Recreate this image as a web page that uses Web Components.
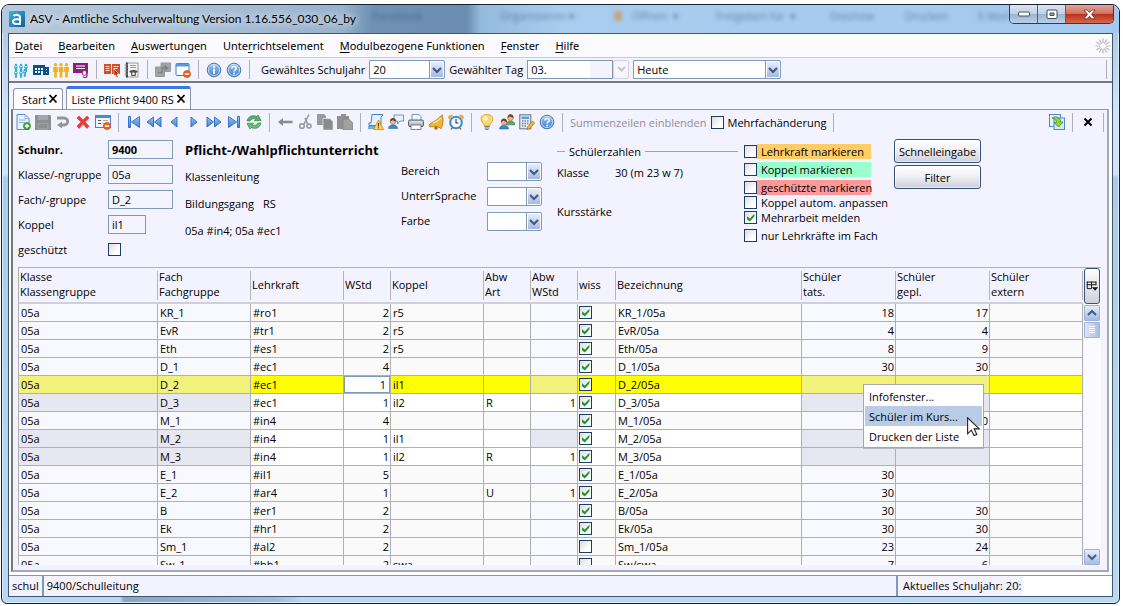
<!DOCTYPE html>
<html lang="de">
<head>
<meta charset="utf-8">
<title>ASV - Amtliche Schulverwaltung</title>
<style>
html, body { margin: 0; background: #fff; }
body { font: 11px/15px "Open Sans", "Noto Sans", sans-serif; color: #000; min-height: 100vh; display: flex; flex-direction: column; }
asv-window { flex: 1; }
</style>
</head>
<body>
<asv-window heading="ASV - Amtliche Schulverwaltung Version 1.16.556_030_06_by">
  <asv-menubar></asv-menubar>
  <asv-mainbar></asv-mainbar>
  <asv-tabs></asv-tabs>
  <asv-panel>
    <asv-listbar></asv-listbar>
    <asv-form></asv-form>
    <asv-grid></asv-grid>
  </asv-panel>
  <asv-status slot="status"></asv-status>
</asv-window>

<script>
const CONTROLS = `
  :host, * { box-sizing: border-box; }
  button, input, select { font: inherit; color: inherit; margin: 0; }
  .field { display: block; height: 19px; border: 1px solid #7f9ab8; background: #f4f4ff; padding: 0 3px; border-radius: 0; outline: 0; }
  .combo { height: 19px; appearance: none; border: 1px solid #7f9ab8; border-radius: 0 2px 2px 0; outline: 0; padding: 0 18px 0 3px; line-height: 17px;
    background: url("data:image/svg+xml,%3Csvg xmlns='http://www.w3.org/2000/svg' width='15' height='17'%3E%3Cdefs%3E%3ClinearGradient id='g' x2='0' y2='1'%3E%3Cstop stop-color='%23eaf0fb'/%3E%3Cstop offset='1' stop-color='%23a3b8de'/%3E%3C/linearGradient%3E%3C/defs%3E%3Cpath d='M0 0h1v17H0z' fill='%237f9ab8'/%3E%3Crect x='1.5' y='.5' width='13' height='16' rx='1' fill='url(%23g)' stroke='%23fff'/%3E%3Cpath d='M4 7l4 4 4-4' fill='none' stroke='%23425a86' stroke-width='2.2'/%3E%3C/svg%3E") right 0 top 0 no-repeat #fff; }
  .tick { appearance: none; flex: none; width: 13px; height: 13px; border: 1px solid #1d3c66; background: linear-gradient(135deg, #dcdcdc, #fff 70%); display: block; }
  .tick:checked { background: url("data:image/svg+xml,%3Csvg xmlns='http://www.w3.org/2000/svg' width='11' height='11'%3E%3Cpath d='M2 4.2v3L4.8 9.6 9.4 4.6V1.8L4.8 6.6z' fill='%2321962b'/%3E%3C/svg%3E") center no-repeat, linear-gradient(135deg, #dcdcdc, #fff 70%); }
  .sep { flex: none; width: 1px; background: #b0b0b8; }
  .tool { flex: none; border: 0; background: none; padding: 0; width: 16px; height: 16px; display: block; }
`;

function define(name, css, html, after) {
  const tpl = document.createElement('template');
  tpl.innerHTML = `<style>${CONTROLS}${css}</style>${html}`;
  customElements.define(name, class extends HTMLElement {
    connectedCallback() {
      if (this.shadowRoot) return;
      this.attachShadow({ mode: 'open' }).append(tpl.content.cloneNode(true));
      if (after) after(this, this.shadowRoot);
    }
  });
}

const person = (x, c) => `<circle cx="${x}" cy="2.7" r="1.7" fill="${c}"/><path d="M${x - 2.3} 5h4.600v5h-1v5.500h-2.600v-5.500h-1z" fill="${c}"/>`;
const kid = (x, y) => `<circle cx="${x}" cy="${y}" r="1.300"/><path d="M${x - 2.300} ${y + .8}l2.300 1.400 2.300-1.400-1.200 3v3h-2.200v-3z"/>`;
const blue = 'fill="url(#b)" stroke="#2b6bc4" stroke-width=".9" stroke-linejoin="round"';
const minus = '<circle cx="12" cy="12" r="3.6" fill="#e8641b" stroke="#c24a0c" stroke-width=".6"/><path d="M9.8 11.3h4.4v1.5H9.8z" fill="#fff"/>';
const round = s => `<circle cx="8" cy="8" r="6.800" fill="url(#b)" stroke="#4a77ae"/><circle cx="8" cy="8" r="5.600" fill="none" stroke="#d6e8fa" stroke-width=".8"/>${s}`;
const query = round('<path d="M5.9 6.4c0-2.6 4.3-2.6 4.3 0 0 1.5-2.1 1.6-2.1 3.2" fill="none" stroke="#fff" stroke-width="1.5"/><circle cx="8.1" cy="11.5" r="1" fill="#fff"/>');
const user = (x, y, c) => `<circle cx="${x}" cy="${y}" r="2.8" fill="#f0bd86" stroke="#8a5a2a" stroke-width=".5"/><path d="M${x - 3} ${y}c0-4.6 6-4.6 6 0-2-.2-3.600-1.500-3.600-1.500s-1 1.500-2.400 1.500z" fill="#6d4420"/><path d="M${x - 4.500} ${y + 7}c0-5 9-5 9 0z" fill="${c}" stroke="#235a9c" stroke-width=".5"/>`;
const ICONS = {
  pupils: `<g fill="#35b1d8">${kid(3, 3)}${kid(8, 3)}${kid(13, 3)}${kid(3, 9)}${kid(8, 9)}${kid(11.8, 8)}</g>`,
  school: '<path d="M0 3h12v2h4v8H0z" fill="#0e4f86"/><path d="M2 6h2v2H2zM5 6h2v2H5zM8 6h2v2H8zM2 9h2v2H2zM5 9h2v2H5zM8 9h2v4H8zM13 7h1v1h-1zM13 10h1v1h-1z" fill="#e8f2fb"/>',
  teachers: person(2.500, '#eeb21c') + person(8, '#eeb21c') + person(13.500, '#eeb21c'),
  cert: '<path d="M0 1h15v10H0z" fill="#8d1d82"/><path d="M3 4h9M3 6.500h9" stroke="#fff"/><circle cx="11.500" cy="11" r="2.400" fill="#fff" stroke="#8d1d82"/><path d="M14 9v5c0 2-3.500 2-4 .6" fill="none" stroke="#8d1d82" stroke-width="1.200"/>',
  book: '<path d="M0 2h7v10H0zM8 2h8v10H8z" fill="#dc4a22"/><path d="M1.500 4.500h4M1.500 6.500h4M1.500 8.500h4M9.500 4.500h5M9.500 6.500h4" stroke="#fff" stroke-width=".8"/><path d="M10 7l5 5-2 .3 1 2.700-1.500.4-1-2.600-1.500 1z" fill="#b52a0c" stroke="#fff" stroke-width=".5"/>',
  phone: '<path d="M2 1h12v14H2z" fill="#f4f4f4" stroke="#999"/><path d="M2 .5h2v15H2z" fill="#4a4e54"/><path d="M.5 3h3M.5 6h3M.5 9h3M.5 12h3" stroke="#8f959c"/><path d="M6 3.500h6M6 5.500h6" stroke="#999"/><path d="M5 10c2-3 7-3 9 0l-2 .8-.3 3.200H7.300L7 10.800z" fill="#555"/><circle cx="9.500" cy="11.800" r="1.300" fill="#fff"/>',
  stack: '<g fill="#a3a3a3" stroke="#999"><path d="M6 1h9.500v8.500H6z"/><path d="M.5 5h9v9.500h-9z"/></g><path d="M3 10.500h4V6h4M9.500 3.500L12.500 6l-3 2.500" fill="none" stroke="#808080" stroke-width="1.500"/>',
  winclose: `<rect x="1" y="1.500" width="13" height="12" rx="1" fill="#fff" stroke="#3f7cc4"/><path d="M1 1.500h13v3H1z" fill="#5a97dc"/>${minus}`,
  info: round('<circle cx="8" cy="4.600" r="1.200" fill="#fff"/><path d="M7.100 6.800h1.900V12H7.100z" fill="#fff"/>'),
  help: query,
  fresh: '<path d="M2 .5h8l4 4v11H2z" fill="#e8f2fc" stroke="#4d8fd0"/><path d="M10 .5v4h4M4 6h7M4 8.500h6" fill="none" stroke="#8ab6e0"/><circle cx="12" cy="12" r="3.600" fill="#4ea73c" stroke="#2f7d22" stroke-width=".6"/><path d="M12 10v4M10 12h4" stroke="#fff" stroke-width="1.300"/>',
  save: '<path d="M0 1h15l1 1v14H0z" fill="#8f8f8f"/><path d="M3 1h10v5H3z" fill="#a6a6a6"/><path d="M2.500 9h11v7h-11z" fill="#9d9d9d"/><path d="M4 11h8M4 13h8" stroke="#808080"/>',
  undo: '<path d="M2 4h7c5 0 5 7 0 7H6" fill="none" stroke="#959595" stroke-width="2.800"/><path d="M7 7.500v7L2 11z" fill="#959595"/>',
  cross: '<path d="M2 4l2-2 4 4 4-4 2 2-4 4 4 4-2 2.500-4-4.300-4 4.300L2 12l4-4z" fill="#ee3a30" stroke="#c9241c" stroke-width=".5"/>',
  form: `<rect x=".5" y="1.500" width="15" height="12" fill="#eef4fd" stroke="#4b82c4"/><path d="M.5 1.500h15v2.500H.5z" fill="#4d8ad6"/><path d="M3 6.500h3M3 9.500h3" stroke="#555"/><path d="M8 6.500h5M8 9.500h3" stroke="#f0a040"/>${minus}`,
  first: `<path d="M2.500 2.500h2v11h-2zM13.500 2.500v11L5.500 8z" ${blue}/>`,
  rew: `<path d="M7.500 3v10L1 8zM15 3v10L8.500 8z" ${blue}/>`,
  prev: `<path d="M11 3v10L5 8z" ${blue}/>`,
  next: `<path d="M5 3v10l6-5z" ${blue}/>`,
  fwd: `<path d="M1 3v10l6.500-5zM8.500 3v10L15 8z" ${blue}/>`,
  last: `<path d="M11.500 2.500h2v11h-2zM2.500 2.500v11l8-5.500z" ${blue}/>`,
  refresh: '<path d="M1 7c1-5 6-6.500 9.500-4.500L12 1l3 5.500-6.500.3L9.800 5C7.500 4 5 5 4 7z" fill="#57b062" stroke="#2e8540" stroke-width=".7"/><path d="M15 9c-1 5-6 6.500-9.500 4.500L4 15 1 9.500l6.500-.3L6.200 11c2.300 1 4.800 0 5.800-2z" fill="#6cc072" stroke="#2e8540" stroke-width=".7"/>',
  back: '<path d="M1 8l5-4v2.800h9.500v2.400H6V12z" fill="#8b8b8b"/>',
  cut: '<path d="M12 .5L7 10M8 4l3 7" fill="none" stroke="#999" stroke-width="1.600"/><circle cx="5" cy="12" r="2.300" fill="none" stroke="#999" stroke-width="1.600"/><circle cx="12" cy="12" r="2" fill="none" stroke="#999" stroke-width="1.600"/>',
  copy: '<path d="M0 0h7l2 2v9H0z" fill="#9a9a9a"/><path d="M6 4.500h7l3 3V16H6z" fill="#8b8b8b" stroke="#f3f3ff" stroke-width=".6"/>',
  paste: '<path d="M0 2h4V0h5v2h3v13H0z" fill="#909090"/><path d="M6 5h6l4 4v7H6z" fill="#a2a2a2" stroke="#7e7e7e" stroke-width=".6"/>',
  warn: '<path d="M4 .5h11l-2 3v8H1V9h2z" fill="#e4effb" stroke="#3f84ce"/><path d="M0 14.500L1 12h12v2.500z" fill="#7fb2ea" stroke="#3f84ce" stroke-width=".6"/><path d="M10.500 6l5 9.500h-10z" fill="#ffd04a" stroke="#c8861a" stroke-width=".8"/><path d="M10.500 9v3.500M10.500 13.300v1" stroke="#5c3a00" stroke-width="1.100"/>',
  talk: `<path d="M6 1h9.500v6H12l-2.500 3V7H6z" fill="#eaf3fd" stroke="#4b83c4" stroke-width=".8"/>${user(5, 7.500, '#3d86d2')}`,
  print: '<path d="M4 .5h7l2 2V7H4z" fill="#f4f9ff" stroke="#4d7db4" stroke-width=".8"/><rect x=".5" y="6" width="15" height="6.500" rx="1.500" fill="#b8c0cc" stroke="#5a6474"/><path d="M3 11h10v4.500H3z" fill="#fff" stroke="#5a6474" stroke-width=".8"/><path d="M2 8h12" stroke="#eceff4"/>',
  bell: '<path d="M14 .8c1.500 3 1.500 10-1 14C11 12 6 12.500 2 13c-2-2 0-3.500 3-5s6-4 9-7.200z" fill="#f2b436" stroke="#b07412" stroke-width=".8"/><path d="M5 9c3-1 6-3 8-5" fill="none" stroke="#ffe59a" stroke-width="1.300"/><circle cx="8" cy="14" r="1.800" fill="#a86c14"/>',
  clock: '<path d="M0 4c0-3 3-4 5-3L1.500 5.500zM16 4c0-3-3-4-5-3l3.500 4.500z" fill="#f2a52c"/><path d="M3 15.500l1.500-2M13 15.500l-1.500-2" stroke="#b87412" stroke-width="1.500"/><circle cx="8" cy="8.500" r="5.800" fill="#f6fbff" stroke="#3d88cf" stroke-width="2"/><path d="M8 5v4h2.500" fill="none" stroke="#234" stroke-width="1.100"/>',
  bulb: '<path d="M8 .5c-7.500 0-7 7-3 9.500v2h6v-2c4-2.500 4.500-9.500-3-9.500z" fill="#ffd968" stroke="#d99a24" stroke-width=".8"/><ellipse cx="6.500" cy="4.500" rx="2.500" ry="2.200" fill="#fff6cc"/><path d="M5.500 12.500h5M5.500 14h5M6.500 15.500h3" stroke="#777" stroke-width="1.200"/>',
  users: `${user(11.500, 3.800, '#62ab48')}${user(5, 8, '#3d86d2')}`,
  calc: '<rect x=".8" y=".8" width="11" height="14" fill="#e6eaf0" stroke="#5f6f86"/><path d="M2.500 2.500H10v2.500H2.500z" fill="#5fa0dc"/><path d="M3 7h7M3 9.500h7M3 12h5" stroke="#78828f" stroke-width="1.500" stroke-dasharray="1.500 1"/><path d="M8 15.500l.8-3L13.500 7l2.200 2-4.700 5.500z" fill="#f5b440" stroke="#a8701a" stroke-width=".7"/>',
  swap: '<rect x=".5" y=".5" width="11" height="12" fill="#e5f1fc" stroke="#4b8bcc"/><rect x="5" y="4" width="10.500" height="11.500" fill="#d5e9fa" stroke="#4b8bcc"/><path d="M3 4c4-2.500 8.500-.5 8.500 4H14l-4.500 5L5 8.500h2.500C7.500 6 5.500 4.500 3 4z" fill="#8fd63c" stroke="#3f8a1a" stroke-width=".8"/>',
  close: '<path d="M4.500 4.500l7 7M11.500 4.500l-7 7" stroke="#000" stroke-width="1.900"/>',
  columns: '<path d="M2 3.500h11M2.500 3v8h5M2 6.500h11M7.500 3v8M12.500 3v4" fill="none" stroke="#111" stroke-width="1.100"/><path d="M8 9.500h7l-3.500 4z" fill="#111"/>',
  busy: '<g stroke="#b9b9c2" stroke-width="1.200">' + [...Array(12)].map((_, i) => `<path d="M8 .5v4.700" transform="rotate(${i * 30} 8 8)"/>`).join('') + '</g>',
  pointer: '<path d="M.5 .5v13l3-3 2.200 4.500 2.300-1L5.800 9.500H10z" fill="#fff" stroke="#222" stroke-width=".9"/>'
};
const icon = (name, size = 16) => `<svg width="${size}" height="${size}" viewBox="0 0 16 16" aria-hidden="true" style="display:block"><defs><linearGradient id="b" x2="0" y2="1"><stop stop-color="#9cc8f6"/><stop offset="1" stop-color="#3a7cd0"/></linearGradient></defs>${ICONS[name]}</svg>`;
const tool = (name, label) => `<button class="tool" aria-label="${label}">${icon(name)}</button>`;
const tools = list => list.map(([n, l]) => n === '|' ? '<span class="sep"></span>' : tool(n, l)).join('');

define('asv-window', `
  :host { display: flex; flex-direction: column; margin: 4px 3px 2px 1px; border: 1px solid #17202c; border-radius: 8px 8px 6px 6px; padding: 0 6px 6px;
    background: linear-gradient(90deg, transparent 118px, #8ba6c2 122px, #9fbcd9 275px, transparent 300px) 0 bottom / 100% 6px no-repeat,
      linear-gradient(#a7c3e0, #cfe5fa 110px, #cde3f9 170px, #a9cdf0 172px, #b9d8f5); box-shadow: inset 0 0 0 1px #dcecfb; overflow: hidden; }
  header { display: flex; height: 28px; margin: 0 -6px; padding-left: 7px; position: relative;
    background: linear-gradient(90deg, #b7c9dc, #a9bfd6 200px, #98b2cc 340px, #6e91b4 370px, #6a8db1 465px, #93b9dc 478px, #a9cdef 560px, #a4c9ee); }
  .logo { width: 16px; height: 16px; margin: 6px 5px 0 0; flex: none; }
  h1 { font: 12px/27px Lato, "Open Sans", sans-serif; margin: 0; white-space: nowrap; text-shadow: 0 0 6px #e4edf6, 0 0 8px #dce8f4; }
  .ghost { position: absolute; inset: 0; font-size: 11px; line-height: 20px; color: #2f4e70; filter: blur(2px); opacity: .6; overflow: hidden; }
  .ghost i { position: absolute; top: 1px; font-style: normal; white-space: nowrap; }
  .ghost i.o { background: #d08a3a; width: 8px; height: 10px; top: 6px; }
  .caption { display: flex; position: relative; margin: 0 5px 0 auto; height: 19px; border: 1px solid #2d3b4c; border-top: 0; border-radius: 0 0 5px 5px; overflow: hidden; }
  .caption button { width: 28px; border: 0; border-right: 1px solid #4e6176; padding: 0; background: linear-gradient(#d9e6f3, #bfd2e6 48%, #9ab4cf 50%, #b9d0e6); display: grid; place-items: center; }
  .caption button:last-child { width: 47px; border-right: 0; background: linear-gradient(#e5a497, #d2705f 48%, #b8301c 50%, #d6674b); }
  .client { flex: 1; display: flex; flex-direction: column; min-height: 0; border: 1px solid #44566c; background: #f2f2ff; }
  main { flex: 1; display: flex; flex-direction: column; min-height: 0; background: #fff; }
`, `
  <header>
    <div class="ghost" aria-hidden="true"></div>
    <svg class="logo" viewBox="0 0 16 16"><defs><linearGradient id="l" x2="1" y2="1"><stop stop-color="#3cb4dc"/><stop offset="1" stop-color="#0b5d9e"/></linearGradient></defs><rect width="16" height="16" rx="1" fill="url(#l)"/><path d="M4.500 4.800c2.500-1.600 6.500-1.300 6.500 1.800V13H7c-4 0-4-4.800 0-4.800h4" fill="none" stroke="#fff" stroke-width="2"/></svg>
    <h1></h1>
    <div class="caption">
      <button aria-label="Minimieren"><svg width="14" height="6"><rect x="1.500" y="1" width="11" height="4" rx="1" fill="#fff" stroke="#444f5c"/></svg></button>
      <button aria-label="Maximieren"><svg width="12" height="11"><rect x="1" y="1" width="10" height="8.500" rx="1" fill="#fff" stroke="#444f5c"/><path d="M4 4h4v2.500H4z" fill="#8fa6bd" stroke="#444f5c"/></svg></button>
      <button aria-label="Schließen"><svg width="13" height="11"><path d="M1 1h3.200l2.300 2.500L8.800 1H12L8.500 5.300 12 9.800H8.800L6.500 7.200 4.200 9.800H1l3.500-4.500z" fill="#fff" stroke="#5a3a3a" stroke-width=".8"/></svg></button>
    </div>
  </header>
  <div class="client"><main><slot></slot></main><slot name="status"></slot></div>
`, (el, root) => {
  root.querySelector('h1').textContent = el.getAttribute('heading');
  root.querySelector('.ghost').innerHTML = [[371, 'Facebook'], [498, 'Organisieren ▾'], [630, 'Öffnen &nbsp;▾'], [714, 'Freigeben für &nbsp;▾'], [828, 'Diashow'], [903, 'Drucken'], [976, 'E-Mail']].map(([x, t]) => `<i style="left:${x}px">${t}</i>`).join('') + '<i class="o" style="left:612px"></i>';
});

define('asv-menubar', `
  :host { display: block; background: #fafaff; border-bottom: 1px solid #c9c9d2; flex: none; font-family: "Noto Sans", "Open Sans", sans-serif; }
  nav { display: flex; align-items: center; height: 23px; padding: 0 1px 0 6px; gap: 16px; }
  nav a { color: inherit; text-decoration: none; white-space: nowrap; }
  nav svg { margin-left: auto; }
  u { text-underline-offset: 2px; }
`, `<nav><a href="#"><u>D</u>atei</a><a href="#"><u>B</u>earbeiten</a><a href="#"><u>A</u>uswertungen</a><a href="#">Unte<u>r</u>richtselement</a><a href="#"><u>M</u>odulbezogene Funktionen</a><a href="#"><u>F</u>enster</a><a href="#"><u>H</u>ilfe</a>${icon('busy')}</nav>`);

define('asv-mainbar', `
  :host { display: flex; align-items: center; height: 25px; flex: none; padding: 0 5px 0 4px; gap: 4px; background: #f3f3fe; border-bottom: 2px solid #77777f; white-space: nowrap; }
  .sep { height: 19px; margin: 0 3px; }
  .first { margin-left: 4px; }
  .combo.year { width: 76px; }
  .combo.day { width: 148px; }
  .date { display: flex; }
  .date .field { width: 86px; background: linear-gradient(90deg, #fff 62px, #f3f3fe 62px); }
  .date button { width: 16px; height: 19px; padding: 0; border: 1px solid #d2d2da; border-radius: 2px; background: #f5f5fb; display: grid; place-items: center; }
  .end { margin: 0 0 0 auto; }
`, `${tools([['pupils', 'Schüler'], ['school', 'Schule'], ['teachers', 'Lehrkräfte'], ['cert', 'Zeugnisse'], ['|'], ['book', 'Klassenbuch'], ['phone', 'Adressbuch'], ['|'], ['stack', 'Fenster anordnen'], ['winclose', 'Fenster schließen'], ['|'], ['info', 'Info'], ['help', 'Hilfe'], ['|']])}
  <label class="first" for="year">Gewähltes Schuljahr</label><select id="year" class="combo year"><option>20</option></select>
  <label for="day">Gewählter Tag</label><span class="date"><input id="day" class="field" value="03."><button disabled aria-label="Kalender"><svg width="11" height="9"><path d="M2 2l3.500 3.500L9 2" fill="none" stroke="#c6c6cc" stroke-width="2"/></svg></button></span>
  <select class="combo day" aria-label="Tag"><option>Heute</option></select><span class="sep end"></span>`);

define('asv-tabs', `
  :host { display: flex; align-items: flex-end; gap: 3px; height: 26px; flex: none; padding-left: 4px; background: #f4f4ff; }
  button { display: flex; align-items: center; gap: 2px; height: 21px; border: 1px solid #8a94aa; border-bottom: 0; background: #fdfdff; padding: 0 4px 0 8px; white-space: nowrap; border-radius: 3px 3px 0 0; }
  button.on { height: 23px; padding: 0 4px; border-top: 3px solid #3a78e0; border-color: #3a78e0 #8a94aa #8a94aa; }
`, `<button role="tab">Start<svg width="10" height="10" viewBox="0 0 10 10"><path d="M1.500 1l7 7.500M8.500 1l-7 7.500" stroke="#000" stroke-width="1.800"/></svg></button><button role="tab" class="on" aria-selected="true">Liste Pflicht 9400 RS<svg width="10" height="10" viewBox="0 0 10 10"><path d="M1.500 1l7 7.500M8.500 1l-7 7.500" stroke="#000" stroke-width="1.800"/></svg></button>`);

define('asv-panel', `
  :host { flex: 1; min-height: 0; display: flex; flex-direction: column; margin: 0 3px 3px 2px; border: 1px solid #8497b4; border-left: 2px solid #77777f; border-right: 2px solid #a4a8be; border-bottom: 2px solid #a4a8be; background: #f3f3ff; }
`, '<slot></slot>');

define('asv-listbar', `
  :host { display: flex; align-items: center; height: 24px; flex: none; padding: 0 3px 0 2px; gap: 4px; white-space: nowrap; }
  .sep { height: 19px; margin: 0 3px; }
  label { display: flex; align-items: center; gap: 4px; }
  .dim { color: #8e8e98; }
  .end { margin-left: auto; }
  .last { margin-right: 0; }
`, `${tools([['fresh', 'Neu'], ['save', 'Speichern'], ['undo', 'Rückgängig'], ['cross', 'Löschen'], ['form', 'Formular leeren'], ['|'], ['first', 'Erster'], ['rew', 'Zurückspulen'], ['prev', 'Voriger'], ['next', 'Nächster'], ['fwd', 'Vorspulen'], ['last', 'Letzter'], ['refresh', 'Aktualisieren'], ['|'], ['back', 'Zurück'], ['cut', 'Ausschneiden'], ['copy', 'Kopieren'], ['paste', 'Einfügen'], ['|'], ['warn', 'Plausibilität'], ['talk', 'Notiz'], ['print', 'Drucken'], ['bell', 'Erinnerung'], ['clock', 'Wiedervorlage'], ['|'], ['bulb', 'Hinweis'], ['users', 'Gruppe'], ['calc', 'Berechnen'], ['help', 'Hilfe'], ['|']])}
  <span class="dim">Summenzeilen einblenden</span><label><input type="checkbox" class="tick">Mehrfachänderung</label><span class="sep"></span>
  <button class="tool end" aria-label="Übernehmen">${icon('swap')}</button><span class="sep"></span>${tool('close', 'Schließen')}<span class="sep last"></span>`);

const opts = '<option></option>';
define('asv-form', `
  :host { display: grid; grid-template-columns: 167px 216px 156px 187px 150px auto; align-items: start; flex: none; padding: 5px 5px 0; height: 133px; white-space: nowrap; }
  .ids { display: grid; grid-template-columns: 90px 65px; grid-auto-rows: 25px; align-items: start; line-height: 19px; padding-top: 1px; }
  .ids .tick { margin: 3px 0 0; }
  .ids input.field { width: 100%; } .ids input.short { width: 38px; }
  .facts { display: flex; flex-direction: column; gap: 12px; padding-top: 1px; }
  h2 { font-size: 13px; line-height: 20px; margin: 0 0 -3px; }
  .facts p { margin: 0; line-height: 15px; }
  .facts p span { margin-left: 9px; }
  .combos { display: grid; grid-template-columns: 86px 56px; grid-auto-rows: 25px; padding-top: 23px; line-height: 17px; align-items: start; }
  .combos .combo { width: 55px; }
  fieldset { border: 0; border-top: 1px solid #a2a2ae; margin: 5px 6px 0 0; padding: 0; min-width: 0; line-height: 15px; }
  legend { padding: 0 4px; margin-left: 8px; }
  dl { display: grid; grid-template-columns: 58px auto; margin: 6px 0 0; row-gap: 24px; } dd { margin: 0; }
  .marks { display: flex; flex-direction: column; gap: 3px; padding-top: 5px; align-items: flex-start; line-height: 15px; }
  .marks label { display: flex; align-items: center; height: 15px; }
  .marks label span { padding: 0 0 0 4px; }
  .marks .bar span { width: 114px; }
  .marks .tight { margin-top: -3px; }
  .o span { background: #ffcc66; } .g span { background: #99ffcc; } .r span { background: #ff9999; }
  .acts { display: flex; flex-direction: column; gap: 2px; align-items: flex-start; }
  .acts button { width: 87px; height: 24px; padding: 0; border: 1px solid #35527e; border-radius: 3px; background: linear-gradient(#fff, #f2f2f6 40%, #cfcfdc); box-shadow: inset 0 0 0 1px #fff8; }
`, `
  <div class="ids">
    <b><label for="nr">Schulnr.</label></b><input id="nr" class="field" style="font-weight:bold" value="9400">
    <label for="kl">Klasse/-ngruppe</label><input id="kl" class="field" value="05a">
    <label for="fa">Fach/-gruppe</label><input id="fa" class="field" value="D_2">
    <label for="ko">Koppel</label><input id="ko" class="field short" value="il1">
    <label for="ge">geschützt</label><input id="ge" type="checkbox" class="tick">
  </div>
  <div class="facts"><h2>Pflicht-/Wahlpflichtunterricht</h2><p>Klassenleitung</p><p>Bildungsgang<span>RS</span></p><p>05a #in4; 05a #ec1</p></div>
  <div class="combos">
    <label for="be">Bereich</label><select id="be" class="combo">${opts}</select>
    <label for="us">UnterrSprache</label><select id="us" class="combo">${opts}</select>
    <label for="fb">Farbe</label><select id="fb" class="combo">${opts}</select>
  </div>
  <fieldset><legend>Schülerzahlen</legend><dl><dt>Klasse</dt><dd>30 (m 23 w 7)</dd><dt>Kursstärke</dt><dd></dd></dl></fieldset>
  <div class="marks">
    <label class="bar o"><input type="checkbox" class="tick"><span>Lehrkraft markieren</span></label>
    <label class="bar g"><input type="checkbox" class="tick"><span>Koppel markieren</span></label>
    <label class="bar r"><input type="checkbox" class="tick"><span>geschützte markieren</span></label>
    <label class="tight"><input type="checkbox" class="tick"><span>Koppel autom. anpassen</span></label>
    <label class="tight"><input type="checkbox" class="tick" checked><span>Mehrarbeit melden</span></label>
    <label><input type="checkbox" class="tick"><span>nur Lehrkräfte im Fach</span></label>
  </div>
  <div class="acts"><button>Schnelleingabe</button><button>Filter</button></div>
`);

const COLS = [['Klasse<br>Klassengruppe', 139], ['Fach<br>Fachgruppe', 93], ['Lehrkraft', 93], ['WStd', 47], ['Koppel', 93], ['Abw<br>Art', 47], ['Abw<br>WStd', 47], ['wiss', 38], ['Bezeichnung', 0], ['Schüler<br>tats.', 94], ['Schüler<br>gepl.', 94], ['Schüler<br>extern', 93]];
const ROWS = [
  ['KR_1', '#ro1', 2, 'r5', '', '', 1, 'KR_1/05a', 18, 17], ['EvR', '#tr1', 2, 'r5', '', '', 1, 'EvR/05a', 4, 4],
  ['Eth', '#es1', 2, 'r5', '', '', 1, 'Eth/05a', 8, 9], ['D_1', '#ec1', 4, '', '', '', 1, 'D_1/05a', 30, 30],
  ['D_2', '#ec1', 1, 'il1', '', '', 1, 'D_2/05a', '', '', 'sel'], ['D_3', '#ec1', 1, 'il2', 'R', 1, 1, 'D_3/05a', '', '', 'sub'],
  ['M_1', '#in4', 4, '', '', '', 1, 'M_1/05a', '', 30], ['M_2', '#in4', 1, 'il1', '', '', 1, 'M_2/05a', '', '', 'sub'],
  ['M_3', '#in4', 1, 'il2', 'R', 1, 1, 'M_3/05a', '', '', 'sub'], ['E_1', '#il1', 5, '', '', '', 1, 'E_1/05a', 30, ''],
  ['E_2', '#ar4', 1, '', 'U', 1, 1, 'E_2/05a', 30, ''], ['B', '#er1', 2, '', '', '', 1, 'B/05a', 30, 30],
  ['Ek', '#hr1', 2, '', '', '', 1, 'Ek/05a', 30, 30], ['Sm_1', '#al2', 2, '', '', '', 0, 'Sm_1/05a', 23, 24],
  ['Sw_1', '#hh1', 2, 'swa', '', '', 0, 'Sw/swa', 7, 6]
];
const num = new Set([3, 6, 9, 10]), locked = new Set([0, 1, 6, 9, 10]);
const row = r => {
  const cells = ['05a', ...r.slice(0, 9), r[9], ''];
  return `<tr class="${r[10] || ''}">` + cells.map((v, i) => {
    const c = [num.has(i) && 'n', locked.has(i) && !(i === 6 && v) && 'l', i === 3 && r[10] === 'sel' && 'edit', i === 7 && 'c'].filter(Boolean).join(' ');
    return `<td class="${c}">${i === 7 ? `<input type="checkbox" class="tick" aria-label="wiss ${r[0]}"${v ? ' checked' : ''}>` : v}</td>`;
  }).join('') + '</tr>';
};
define('asv-grid', `
  :host { display: flex; gap: 1px; flex: 1 1 0; min-height: 0; margin: 0 6px 5px 5px; position: relative; border-top: 1px solid #b0b0b8; }
  .scroll { flex: 1; min-width: 0; overflow: hidden; background: #fbfbff; }
  table { width: 100%; table-layout: fixed; border-collapse: separate; border-spacing: 0; border-left: 1px solid #b0b0b4; }
  th { height: 36px; padding: 0 1px 2px; text-align: left; font-weight: normal; line-height: 15px; border-bottom: 2px solid #d0d0da; white-space: nowrap;
    background: linear-gradient(#b4b4bc, #b4b4bc) right 3px / 1px 29px no-repeat #f3f3ff; }
  td { height: 18px; line-height: 17px; padding: 0 1px 0 2px; border: 1px solid #b0b0b4; border-width: 0 1px 1px 0; background: #fafafa; white-space: nowrap; overflow: hidden; }
  td.l { background: #f8f8ff; } td.n { text-align: right; }
  .sub td { background: #fff; } .sub td.l { background: #e7e7f1; }
  .sel td { background: #ff0; } .sel td.l { background: #f2f27a; }
  .sel td.edit { background: #fff; box-shadow: inset 0 0 0 1px #7f9ab8; padding-right: 4px; }
  td.c { padding: 0 1px; vertical-align: top; } .c .tick { margin-top: 2px; }
  .bar { width: 17px; flex: none; display: flex; flex-direction: column; background: #fbfbff; }
  .bar button { width: 16px; height: 16px; border: 1px solid #9fb3da; border-radius: 1px; padding: 0; background: linear-gradient(#e6eefb, #a8bce0); display: grid; place-items: center; }
  .bar .cols { height: 36px; margin-bottom: 1px; border: 1px solid #35527e; border-radius: 3px; background: linear-gradient(#fff, #d0d0dc); }
  .bar .thumb { height: 16px; margin-top: 1px; background: linear-gradient(90deg, #dbe5fa, #aabfe8); }
  .bar .down { margin-top: auto; }
  menu { position: absolute; left: 845px; top: 116px; width: 121px; margin: 0; padding: 1px; list-style: none; background: #fff; border: 1px solid #a6a6ac; box-shadow: 0 1px 0 #b8b8c0; }
  menu button { display: block; width: 100%; height: 20px; border: 0; padding: 0 4px; background: none; text-align: left; white-space: nowrap; }
  menu .on { background: #b8cce8; }
  .ptr { position: absolute; left: 949px; top: 149px; }
`, `
  <div class="scroll"><table><colgroup>${COLS.map(c => `<col${c[1] ? ` style="width:${c[1]}px"` : ''}>`).join('')}</colgroup>
  <thead><tr>${COLS.map(c => `<th>${c[0]}</th>`).join('')}</tr></thead><tbody>${ROWS.map(row).join('')}</tbody></table></div>
  <div class="bar"><button class="cols" aria-label="Spalten">${icon('columns', 14)}</button>
    <button aria-label="Nach oben"><svg width="10" height="8"><path d="M1 6l4-4 4 4" fill="none" stroke="#425a86" stroke-width="2"/></svg></button>
    <button class="thumb" aria-label="Bildlauf"><svg width="8" height="8"><path d="M1 .5h6M1 2.500h6M1 4.500h6M1 6.500h6" stroke="#fff"/></svg></button>
    <button class="down" aria-label="Nach unten"><svg width="10" height="8"><path d="M1 2l4 4 4-4" fill="none" stroke="#425a86" stroke-width="2"/></svg></button></div>
  <menu><li><button>Infofenster...</button></li><li><button class="on">Schüler im Kurs...</button></li><li><button>Drucken der Liste</button></li></menu>
  <svg class="ptr" width="16" height="20" viewBox="0 0 13 16" aria-hidden="true">${ICONS.pointer}</svg>
`);

define('asv-status', `
  :host { display: flex; height: 21px; flex: none; border-top: 1px solid #8497b4; background: #f3f3ff; line-height: 20px; white-space: nowrap; }
  span { padding: 0 3px; border-right: 2px solid #8497b4; }
  .user { flex: 1; }
  .year { width: 124px; padding-left: 5px; border: 0; overflow: hidden; }
  .rest { width: 90px; background: #fff; border: 0; }
`, '<span>schul</span><span class="user">9400/Schulleitung</span><span class="year">Aktuelles Schuljahr: 20:</span><span class="rest"></span>');
</script>
</body>
</html>
